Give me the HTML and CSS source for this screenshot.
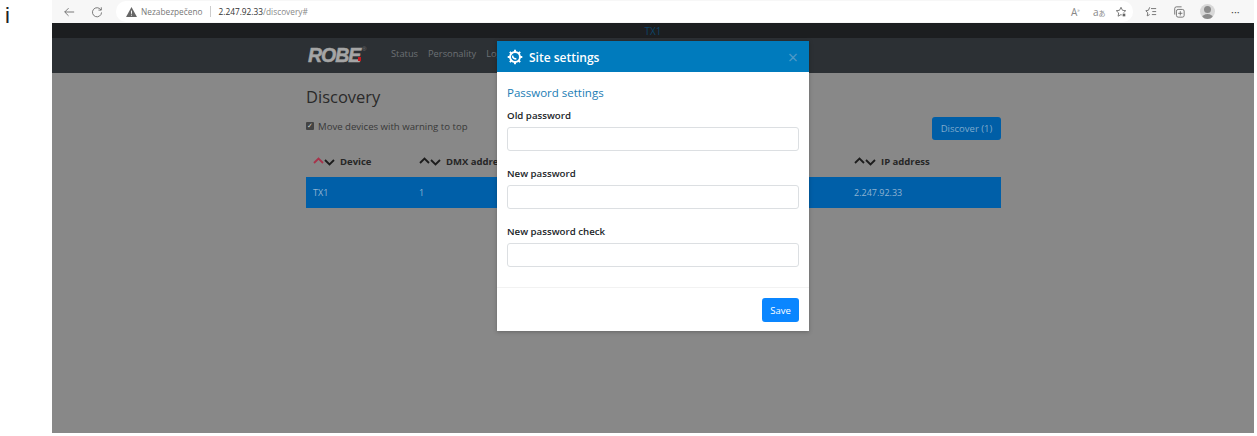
FILE: index.html
```html
<!DOCTYPE html>
<html lang="en">
<head>
    <meta charset="UTF-8">
    <title>Site settings</title>
    <link rel="stylesheet" href="styles.css">
</head>
<body>
    <div class="shot">
        <div class="side">i</div>
        <div class="window">
            <div class="browser-bar">
                <svg class="tool-icon back" viewBox="0 0 14 14"><path d="M13 7H2M6.500 2.500L2 7l4.500 4.500"/></svg>
                <svg class="tool-icon reload" viewBox="0 0 14 14"><path d="M11.500 4.500A5.300 5.300 0 1 0 12.300 7.500M12 1.500v3.300H8.700"/></svg>
                <div class="address">
                    <svg class="warn" viewBox="0 0 12 11"><path d="M6 0L12 11H0Z"/><path class="warn-mark" d="M6 4v3.500M6 8.500v1"/></svg>
                    <span class="not-secure">Nezabezpečeno</span>
                    <span class="divider"></span>
                    <span class="url"><b>2.247.92.33</b>/discovery#</span>
                    <div class="address-tools">
                        <span class="read-icon">A<sup>»</sup></span>
                        <span class="read-icon">a<small>あ</small></span>
                        <svg class="tool-icon" viewBox="0 0 14 14"><path d="M7 1.500l1.700 3.500 3.800.5-2.800 2.600.7 3.800L7 10"/><path d="M7 1.500L5.300 5l-3.800.5 2.800 2.600-.7 3.800L7 10"/><circle class="dot" cx="10.500" cy="10.500" r="2.300"/></svg>
                    </div>
                </div>
                <div class="tools">
                    <svg class="tool-icon" viewBox="0 0 14 14"><path d="M5.500 1.500L4 5l-3 .5L3.200 8l-.6 3.500L5.500 10M7 3h6M8.500 6.500H13M8 10h5"/></svg>
                    <svg class="tool-icon collections" viewBox="0 0 14 14"><rect x="4" y="4" width="9" height="9" rx="2"/><path d="M8.500 6v5M6 8.500h5M2 10V3a2 2 0 0 1 2-2h6"/></svg>
                    <div class="avatar"><span class="avatar-head"></span><span class="avatar-body"></span></div>
                    <span class="more">···</span>
                </div>
            </div>

            <div class="page">
                <div class="device-strip">TX1</div>
                <div class="navbar">
                    <div class="navbar-inner">
                        <span class="logo">ROBE<i class="logo-dot"></i><sup>®</sup></span>
                        <a class="nav-link">Status</a>
                        <a class="nav-link">Personality</a>
                        <a class="nav-link">Log</a>
                    </div>
                </div>
                <div class="content">
                    <h1 class="title">Discovery</h1>
                    <div class="toolbar">
                        <label class="check-label"><span class="check">✓</span>Move devices with warning to top</label>
                        <button type="button" class="discover-button">Discover (1)</button>
                    </div>
                    <table class="device-table">
                        <thead>
                            <tr>
                                <th class="col-device"><span class="sort"><svg viewBox="0 0 11 7"><path class="sort-active" d="M1 6l4.500-4.500L10 6"/></svg><svg viewBox="0 0 11 7"><path d="M1 1l4.500 4.500L10 1"/></svg></span>Device</th>
                                <th class="col-dmx"><span class="sort"><svg viewBox="0 0 11 7"><path d="M1 6l4.500-4.500L10 6"/></svg><svg viewBox="0 0 11 7"><path d="M1 1l4.500 4.500L10 1"/></svg></span>DMX address</th>
                                <th class="col-gap"></th>
                                <th class="col-ip"><span class="sort"><svg viewBox="0 0 11 7"><path d="M1 6l4.500-4.500L10 6"/></svg><svg viewBox="0 0 11 7"><path d="M1 1l4.500 4.500L10 1"/></svg></span>IP address</th>
                            </tr>
                        </thead>
                        <tbody>
                            <tr>
                                <td>TX1</td>
                                <td>1</td>
                                <td></td>
                                <td>2.247.92.33</td>
                            </tr>
                        </tbody>
                    </table>
                </div>
                <div class="modal">
                    <div class="modal-header">
                        <svg class="gear" viewBox="0 0 18 18"><circle cx="9" cy="9" r="5.600"/><path class="gear-teeth" d="M9 .8v3M9 14.200v3M.8 9h3M14.200 9h3M3.200 3.200l2.100 2.100M12.700 12.700l2.100 2.100M3.200 14.800l2.100-2.100M12.700 5.300l2.100-2.100"/><path class="gear-cut" d="M6.500 7.500a2.800 2.800 0 0 0 4 3.200"/></svg>
                        <span class="modal-title">Site settings</span>
                        <span class="modal-close">×</span>
                    </div>
                    <form class="modal-body">
                        <h2 class="section-title">Password settings</h2>
                        <div class="form-group">
                            <label for="old">Old password</label>
                            <input type="password" id="old">
                        </div>
                        <div class="form-group">
                            <label for="new">New password</label>
                            <input type="password" id="new">
                        </div>
                        <div class="form-group">
                            <label for="check">New password check</label>
                            <input type="password" id="check">
                        </div>
                    </form>
                    <div class="modal-footer">
                        <button type="button" class="save-button">Save</button>
                    </div>
                </div>
            </div>
        </div>
    </div>
</body>
</html>
```

FILE: styles.css
```css
html, body {
    margin: 0;
    padding: 0;
    height: 100%;
    background-color: #fff;
    overflow: hidden;
}
.shot {
    display: flex;
    width: 1257px;
    height: 433px;
    font-family: "Open Sans", "Noto Sans", sans-serif;
}
.side {
    width: 52px;
    padding: 3px 0 0 5px;
    box-sizing: border-box;
    font-family: "Liberation Sans", sans-serif;
    font-size: 22px;
    line-height: 26px;
    color: #222;
}
.window {
    width: 1202px;
    display: flex;
    flex-direction: column;
}

/* browser toolbar */
.browser-bar {
    height: 23px;
    flex: none;
    display: flex;
    align-items: center;
    background-color: #f7f7f7;
    color: #555;
}
.tool-icon {
    width: 12px;
    height: 12px;
    flex: none;
    fill: none;
    stroke: #666;
    stroke-width: 1;
}
.back {
    margin-left: 11px;
}
.reload {
    margin-left: 16px;
}
.address {
    display: flex;
    align-items: center;
    margin-left: 13px;
    width: 1017px;
    height: 21px;
    box-sizing: border-box;
    background-color: #fff;
    border-radius: 10px;
    font-size: 8.300px;
    padding: 0 6px 0 10px;
}
.warn {
    width: 11px;
    height: 10px;
    fill: #666;
}
.warn-mark {
    stroke: #fff;
    stroke-width: 1;
}
.not-secure {
    margin-left: 4px;
    color: #777;
}
.divider {
    width: 1px;
    height: 11px;
    background-color: #ccc;
    margin: 0 7.500px;
}
.url {
    color: #888;
}
.url b {
    font-weight: 400;
    color: #333;
}
.address-tools {
    display: flex;
    align-items: center;
    gap: 11px;
    margin-left: auto;
}
.read-icon {
    font-size: 10px;
    color: #888;
    width: 11px;
    white-space: nowrap;
}
.read-icon sup {
    font-size: 5px;
}
.read-icon small {
    font-family: "Noto Sans CJK JP", sans-serif;
    font-size: 7px;
}
.dot {
    fill: #666;
    stroke: #fff;
}
.tools {
    display: flex;
    align-items: center;
    padding-left: 12px;
}
.collections {
    margin-left: 16px;
}
.avatar {
    position: relative;
    width: 15px;
    height: 15px;
    border-radius: 50%;
    background-color: #d8d8d8;
    overflow: hidden;
    margin-left: 15px;
}
.avatar-head {
    position: absolute;
    left: 4px;
    top: 2px;
    width: 7px;
    height: 7px;
    border-radius: 50%;
    background-color: #8b8b8b;
}
.avatar-body {
    position: absolute;
    left: 2px;
    top: 10px;
    width: 11px;
    height: 8px;
    border-radius: 50%;
    background-color: #8b8b8b;
}
.more {
    font-size: 11px;
    color: #444;
    margin-left: 16px;
}

/* dimmed page */
.page {
    position: relative;
    flex: 1;
    background-color: #888;
    overflow: hidden;
}
.device-strip {
    height: 15px;
    background-color: #1c1e20;
    text-align: center;
    font-size: 10px;
    line-height: 16px;
    color: #0d4468;
}
.navbar {
    height: 35px;
    background-color: #2c3034;
}
.navbar-inner {
    display: flex;
    align-items: center;
    gap: 10px;
    height: 100%;
    padding-left: 256px;
    padding-bottom: 4px;
    box-sizing: border-box;
}
.logo {
    position: relative;
    font-family: "Liberation Sans", sans-serif;
    font-weight: 700;
    font-style: italic;
    font-size: 19.500px;
    letter-spacing: -1px;
    color: #a5a5a5;
    -webkit-text-stroke: 0.500px #a5a5a5;
    width: 59px;
    margin-top: 4px;
    margin-right: 14px;
}
.logo sup {
    position: absolute;
    left: 54px;
    top: 1px;
    font-size: 6px;
    font-style: normal;
    font-weight: 400;
    line-height: 8px;
    color: #777;
    -webkit-text-stroke: 0;
}
.logo-dot {
    position: absolute;
    left: 50px;
    top: 13px;
    width: 3px;
    height: 4px;
    background-color: #c8191f;
}
.nav-link {
    font-size: 9.300px;
    color: #6c7074;
}
.content {
    width: 695px;
    margin-left: 254px;
    padding-top: 12px;
}
.title {
    margin: 0;
    font-size: 16.500px;
    line-height: 24px;
    font-weight: 500;
    color: #2a2a2a;
}
.toolbar {
    display: flex;
    align-items: center;
    justify-content: space-between;
    height: 26px;
    margin-top: 5px;
}
.check-label {
    display: flex;
    align-items: center;
    gap: 4px;
    font-size: 9.600px;
    color: #383838;
    padding-bottom: 2px;
}
.check {
    width: 8px;
    height: 8px;
    background-color: #444;
    border-radius: 1px;
    color: #ccc;
    font-size: 7px;
    line-height: 8px;
    text-align: center;
}
.discover-button {
    width: 69px;
    height: 23px;
    margin-top: 3px;
    padding: 0;
    border: none;
    border-radius: 3px;
    background-color: #005ea6;
    color: #7faacc;
    font-family: inherit;
    font-size: 9.500px;
}
.device-table {
    width: 100%;
    margin-top: 5px;
    border-collapse: collapse;
    table-layout: fixed;
    font-size: 9.500px;
    color: #8fb3d2;
}
.device-table th {
    height: 32px;
    padding: 0 0 0 7px;
    text-align: left;
    color: #262626;
    font-weight: 700;
    white-space: nowrap;
}
.device-table td {
    height: 31px;
    padding: 0 0 0 7px;
    font-size: 9px;
    background-color: #005fa8;
}
.col-device {
    width: 99px;
}
.col-dmx {
    width: 120px;
}
.col-ip {
    width: 147px;
}
.sort {
    display: inline-flex;
    margin-right: 5px;
    vertical-align: middle;
}
.sort svg {
    width: 11px;
    height: 7px;
    fill: none;
    stroke: #1c1c1c;
    stroke-width: 1.800;
}
.sort svg + svg {
    margin-top: 2px;
}
.sort .sort-active {
    stroke: #a8324a;
}

/* modal */
.modal {
    position: absolute;
    left: 445px;
    top: 18px;
    width: 312px;
    background-color: #fff;
    box-shadow: 0 1px 4px rgba(0, 0, 0, 0.25);
}
.modal-header {
    display: flex;
    align-items: center;
    height: 31px;
    padding: 1px 10px 0;
    box-sizing: border-box;
    background-color: #007bbd;
    color: #fff;
}
.gear {
    width: 16px;
    height: 16px;
    fill: none;
    stroke: #fff;
    stroke-width: 2.200;
}
.gear-cut {
    stroke-width: 1.800;
}
.modal-title {
    margin-left: 6px;
    font-size: 12px;
    font-weight: 600;
}
.modal-close {
    margin-left: auto;
    margin-right: 1px;
    font-size: 18px;
    line-height: 18px;
    color: #4f9ac8;
}
.modal-body {
    padding: 13px 10px 4px;
}
.section-title {
    margin: 0 0 8px;
    font-size: 11.500px;
    line-height: 16px;
    font-weight: 500;
    color: #1b7db5;
}
.form-group {
    margin-bottom: 16px;
}
.form-group label {
    display: block;
    font-size: 9.700px;
    line-height: 14px;
    font-weight: 600;
    color: #212529;
    margin-bottom: 4px;
}
.form-group input {
    display: block;
    width: 100%;
    height: 24px;
    box-sizing: border-box;
    padding: 0 6px;
    border: 1px solid #dcdfe2;
    border-radius: 3px;
    background-color: #fff;
}
.modal-footer {
    display: flex;
    justify-content: flex-end;
    height: 44px;
    padding: 10px 10px 0;
    box-sizing: border-box;
    border-top: 1px solid #f2f2f2;
}
.save-button {
    width: 37px;
    height: 24px;
    padding: 0;
    border: none;
    border-radius: 3px;
    background-color: #0a86ff;
    color: #fff;
    font-family: inherit;
    font-size: 9.500px;
}
```
